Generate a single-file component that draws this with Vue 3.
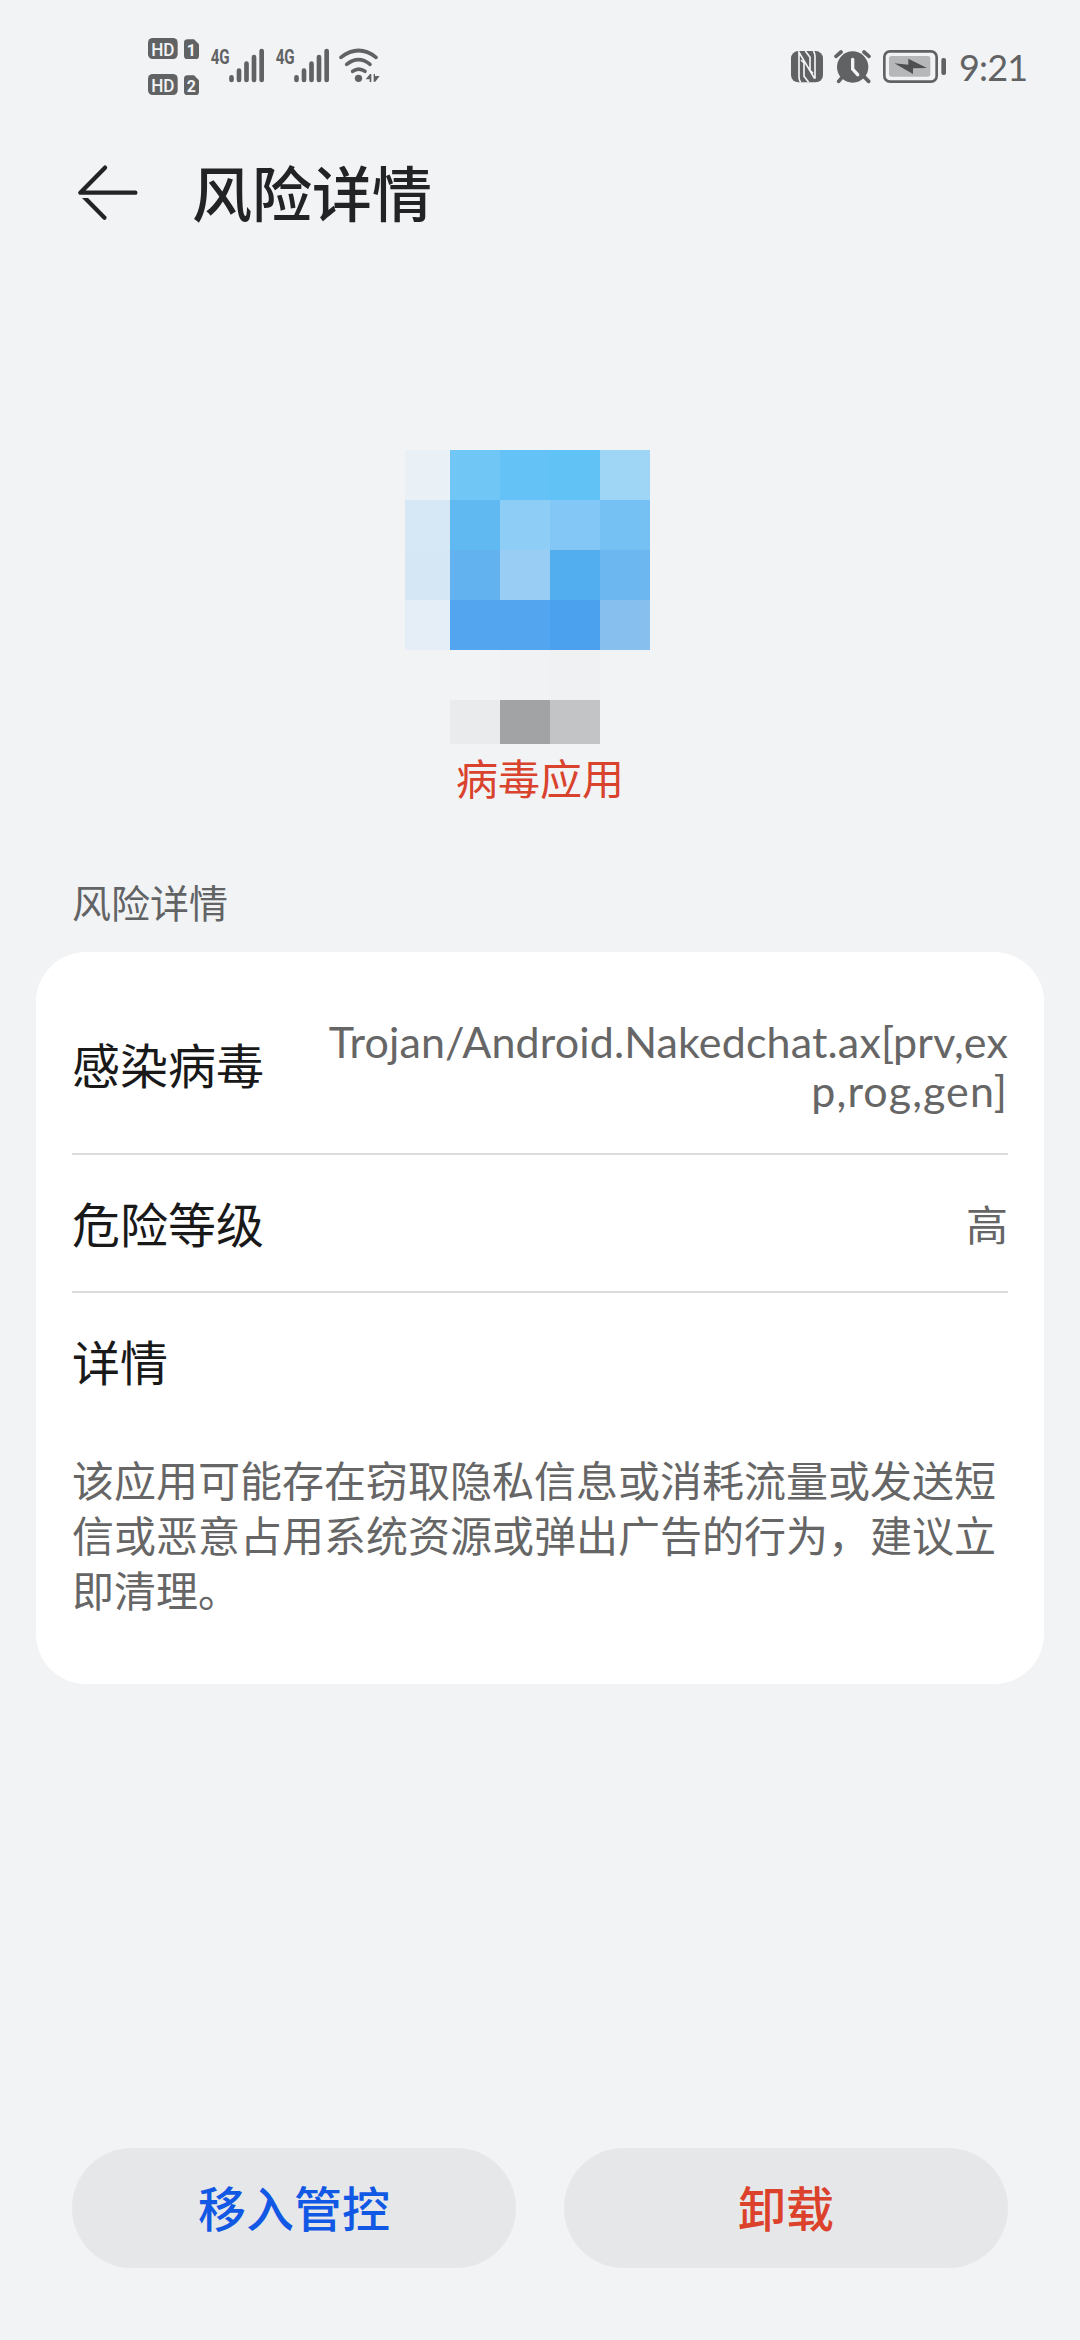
<script setup>
const tiles = [
  ['#e9f1f7', '#70c6f5', '#64c2f6', '#61c2f5', '#9fd6f5'],
  ['#d6e8f6', '#61b9f2', '#8ecdf5', '#82c7f6', '#75c1f4'],
  ['#d5e7f5', '#63b2f0', '#99cdf4', '#53aef0', '#6db7f1'],
  ['#e5edf6', '#52a5ee', '#52a5ee', '#4ca1ee', '#87c0ef'],
  ['transparent', 'transparent', '#f1f2f4', '#f0f1f3', 'transparent'],
  ['transparent', '#eaebed', '#a2a3a5', '#c3c4c6', 'transparent'],
].flat()
const sims = [1, 2]
</script>

<template>
  <div class="screen">
    <header class="status">
      <svg class="ico hd" width="52" height="59" viewBox="54 51 156 177">
        <g v-for="n in sims" :key="n" :transform="`translate(0 ${(n - 1) * 108})`">
          <rect x="54" y="54" width="89" height="63" rx="14" />
          <text x="98.500" y="107" class="badge" textLength="70" lengthAdjust="spacingAndGlyphs">HD</text>
          <path d="M173 58h19l15 15v34q0 10-10 10h-25q-10 0-10-10V68q0-10 11-10z" />
          <text x="184" y="108" class="badge num">{{ n }}</text>
        </g>
      </svg>
      <svg v-for="n in sims" :key="n" class="ico signal" width="55" height="59" viewBox="240 51 165 177">
        <text x="242" y="131" class="net" textLength="57" lengthAdjust="spacingAndGlyphs">4G</text>
        <path class="bars" d="M304.500 172v8M327 152v28M349.500 131v49M372 111v69M395 93v87" />
      </svg>
      <svg class="ico wifi" width="41" height="59" viewBox="627 51 123 177">
        <g class="arcs">
          <path d="M633 112q53-41 105 0" />
          <path d="M650 133q36-28 70 0" />
          <path d="M668 154q18-13 37 0" />
        </g>
        <circle cx="685.500" cy="175" r="11" />
        <path d="M707 178l13-16h4v24h-5v-8zM731 162h4v6h14l-13 17h-5z" />
      </svg>
      <span class="spring"></span>
      <svg class="ico nfc" width="34" height="37" viewBox="60 51 102 111">
        <rect x="63" y="63" width="96" height="94" rx="22" />
        <path class="nline" d="M92 157q-5-7-5-16V67l47 79M130 63q5 7 5 16v67M93 90l9 9v40l14 18M129 130l-9-9V82L106 63" />
      </svg>
      <svg class="ico alarm" width="37" height="37" viewBox="192 51 111 111">
        <path class="legs" d="M198 79l15-13M297 79l-15-13M206 154l12-14M296 154l-14-14" />
        <circle cx="248" cy="111" r="47" />
        <path class="hands" d="M248 88v29l15 17" />
      </svg>
      <svg class="ico battery" width="65" height="37" viewBox="336 51 195 111">
        <rect class="case" x="343" y="64" width="157" height="91" rx="17" />
        <rect class="level" x="357" y="78" width="124" height="62" rx="7" />
        <path class="bolt" d="M373 100l42 4V86l56 28-42 1v17z" />
        <rect x="514" y="84" width="14" height="51" rx="6" />
      </svg>
      <span class="time">9:21</span>
    </header>

    <nav class="titlebar">
      <svg class="back" width="61" height="57" viewBox="81 69 183 171">
        <path d="M165 80L91 155H256" />
        <path class="lower" d="M96 171h18l54 55q4 5 0 9t-9 0z" />
      </svg>
      <h1>风险详情</h1>
    </nav>

    <section class="app">
      <div class="mosaic">
        <i v-for="(c, i) in tiles" :key="i" :style="{ background: c }"></i>
      </div>
      <p class="verdict">病毒应用</p>
    </section>

    <h2>风险详情</h2>
    <main class="card">
      <div class="row virus">
        <span class="label">感染病毒</span>
        <span class="value">Trojan/Android.Nakedchat.ax[prv,ex<br /><span class="tail">p,rog,gen]</span></span>
      </div>
      <div class="row level-row">
        <span class="label">危险等级</span>
        <span class="value zh">高</span>
      </div>
      <div class="detail">
        <span class="label">详情</span>
        <p>该应用可能存在窃取隐私信息或消耗流量或发送短<br />信或恶意占用系统资源或弹出广告的行为，建议立<br />即清理。</p>
      </div>
    </main>

    <footer>
      <button class="move">移入管控</button>
      <button class="remove">卸载</button>
    </footer>
  </div>
</template>

<style>
body { background: #f2f3f5; }
</style>

<style scoped>
.screen {
  box-sizing: border-box;
  width: 1080px;
  height: 2340px;
  background: #f2f3f5;
  font-family: "Noto Sans CJK SC", sans-serif;
  display: flex;
  flex-direction: column;
  overflow: hidden;
}
h1, h2, p { margin: 0; font-weight: 400; }
.status {
  display: flex;
  height: 132px;
  box-sizing: border-box;
  padding: 37px 52px 0 148px;
  align-items: flex-start;
}
.ico { fill: #616264; flex: none; display: block; }
.signal { margin-left: 10px; }
.wifi { margin-left: 9px; }
.badge {
  fill: #f2f3f5;
  font: 500 56px Roboto, sans-serif;
  text-anchor: middle;
}
.badge.num { font-size: 48px; font-weight: 700; }
.net { font: 700 60px Roboto, sans-serif; }
.bars { stroke: #616264; stroke-width: 14; stroke-linecap: round; }
.arcs { fill: none; stroke: #616264; stroke-width: 11; stroke-linecap: round; }
.spring { flex: 1; }
.nfc, .alarm, .battery { margin-top: 10px; }
.nline { fill: none; stroke: #f2f3f5; stroke-width: 5; }
.alarm { margin-left: 10px; }
.legs { stroke: #616264; stroke-width: 11; stroke-linecap: round; }
.hands { fill: none; stroke: #f2f3f5; stroke-width: 10; stroke-linecap: round; }
.battery { margin-left: 11px; }
.case { fill: none; stroke: #616264; stroke-width: 8; }
.level { fill: #b6b7b9; }
.bolt { fill: #4e4f51; }
.time {
  width: 69px;
  margin-left: 12px;
  margin-top: 9px;
  font: 400 36px/42px Lato, sans-serif;
  letter-spacing: -0.8px;
  color: #616264;
  white-space: nowrap;
}
.titlebar {
  display: flex;
  align-items: center;
  height: 120px;
  padding-left: 77px;
}
.back { display: block; fill: none; stroke: #222325; stroke-width: 13; stroke-linecap: round; stroke-linejoin: round; }
.back .lower { fill: #222325; stroke: none; }
h1 {
  margin-left: 54px;
  margin-bottom: 3px;
  font-size: 60px;
  line-height: 90px;
  font-weight: 500;
  color: #222325;
}
.app { margin-top: 198px; }
.mosaic {
  display: grid;
  grid-template-columns: 45px repeat(4, 50px);
  grid-template-rows: repeat(5, 50px) 44px;
  margin-left: 405px;
}
.verdict {
  margin-top: 3px;
  text-align: center;
  font-size: 42px;
  line-height: 60px;
  color: #d9432e;
}
h2 {
  margin: 64px 0 0 72px;
  font-size: 39px;
  line-height: 60px;
  color: #626365;
}
.card {
  box-sizing: border-box;
  height: 732px;
  margin: 21px 36px 0;
  padding: 0 36px;
  background: #fff;
  border-radius: 50px;
}
.row {
  box-sizing: border-box;
  display: flex;
  align-items: center;
  justify-content: space-between;
  border-bottom: 2px solid #dcdcdd;
}
.virus { height: 203px; padding-top: 26px; }
.level-row { height: 138px; }
.level-row .label, .level-row .value { margin-bottom: 2px; }
.label { font-size: 48px; line-height: 72px; color: #19191a; }
.virus .label { margin-bottom: 5px; }
.value {
  text-align: right;
  font-family: Lato, "Noto Sans CJK SC", sans-serif;
  font-size: 43px;
  line-height: 49px;
  letter-spacing: 0.15px;
  color: #666;
  white-space: nowrap;
}
.tail { letter-spacing: 1.100px; }
.value.zh { font-size: 42px; letter-spacing: 0; font-family: "Noto Sans CJK SC", sans-serif; }
.detail { padding-top: 31px; }
.detail .label { display: block; }
.detail p {
  margin-top: 55px;
  font-size: 42px;
  line-height: 55.200px;
  color: #666;
  white-space: nowrap;
}
footer {
  display: flex;
  gap: 48px;
  margin: auto 72px 72px;
}
button {
  flex: 1;
  height: 120px;
  border: 0;
  padding: 0 0 4px;
  border-radius: 60px;
  background: #e6e7e9;
  font: 500 48px/116px "Noto Sans CJK SC", sans-serif;
}
.move { color: #1158e4; }
.remove { color: #dc422b; }
</style>
